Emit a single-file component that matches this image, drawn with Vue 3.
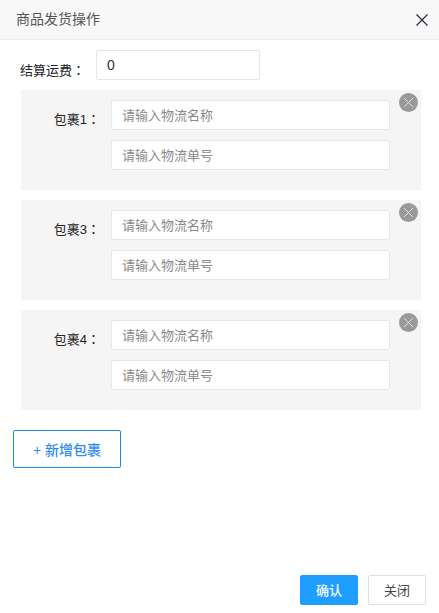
<script setup>
const packages = [1, 3, 4];
</script>

<template>
  <div class="dialog">
    <div class="dialog-header">
      <span class="dialog-title">商品发货操作</span>
      <svg class="close-icon" width="12" height="12" viewBox="0 0 12 12">
        <path d="M0.5 0.5 L11.5 11.5 M11.5 0.5 L0.5 11.5" stroke="#2f2f3f" stroke-width="1.3" fill="none" />
      </svg>
    </div>

    <div class="dialog-body">
      <div class="fee-row">
        <label class="fee-label">结算运费<span class="colon">：</span></label>
        <input class="fee-input" value="0" />
      </div>

      <div v-for="item in packages" :key="item" class="package">
        <label class="package-label">包裹{{ item }}<span class="colon">：</span></label>
        <div class="package-fields">
          <input class="text-input" placeholder="请输入物流名称" />
          <input class="text-input" placeholder="请输入物流单号" />
        </div>
        <span class="remove-btn">
          <svg width="19" height="19" viewBox="0 0 19 19">
            <path d="M5 5 L14 14 M14 5 L5 14" stroke="#dedede" stroke-width="1" fill="none" />
          </svg>
        </span>
      </div>

      <button class="add-btn">+ 新增包裹</button>
    </div>

    <div class="dialog-footer">
      <button class="btn btn-primary">确认</button>
      <button class="btn btn-default">关闭</button>
    </div>
  </div>
</template>

<style scoped>
.dialog {
  width: 439px;
  height: 613px;
  display: flex;
  flex-direction: column;
  background: #fff;
  font-family: "Liberation Sans", "Noto Sans CJK SC", sans-serif;
  font-size: 13px;
  color: #333;
  box-sizing: border-box;
  overflow: hidden;
}

.dialog-header {
  height: 39px;
  flex-shrink: 0;
  background: #f8f8f8;
  border-bottom: 1px solid #eee;
  display: flex;
  align-items: center;
  justify-content: space-between;
  padding: 0 11px 0 16px;
}

.dialog-title {
  font-size: 14px;
  color: #555;
  margin-top: -3px;
}

.dialog-body {
  flex: 1;
  padding: 10px 18px 0 13px;
}

.fee-row {
  display: flex;
  align-items: flex-start;
  margin-bottom: 10px;
}

.fee-label {
  width: 83px;
  padding: 10px 0 0 7px;
  box-sizing: border-box;
  color: #222;
}

.colon {
  font-family: "Noto Sans CJK TC", sans-serif;
}

.fee-input {
  width: 164px;
  height: 30px;
  padding: 0 10px 1px;
  box-sizing: border-box;
  border: 1px solid #e6e6e6;
  border-radius: 2px;
  font-family: inherit;
  font-size: 14px;
  color: #333;
  outline: none;
}

.package {
  position: relative;
  display: flex;
  align-items: flex-start;
  height: 100px;
  margin: 0 0 10px 8px;
  padding: 10px 0;
  box-sizing: border-box;
  background: #f5f5f5;
}

.package-label {
  width: 90px;
  padding-top: 9px;
  padding-right: 11px;
  box-sizing: border-box;
  text-align: right;
  color: #222;
}

.package-fields {
  display: flex;
  flex-direction: column;
  gap: 10px;
}

.text-input {
  width: 279px;
  height: 30px;
  padding: 0 10px;
  box-sizing: border-box;
  border: 1px solid #e6e6e6;
  border-radius: 2px;
  background: #fff;
  font-family: inherit;
  font-size: 13px;
  outline: none;
}

.text-input::placeholder {
  color: #8a8a8a;
}

.remove-btn {
  position: absolute;
  top: 3px;
  right: 3px;
  width: 19px;
  height: 19px;
  border-radius: 50%;
  background: #999;
  display: flex;
}

.add-btn {
  display: block;
  width: 108px;
  height: 38px;
  margin-top: 20px;
  border: 1px solid #1e88e5;
  border-radius: 2px;
  background: #fff;
  color: #2d8cf0;
  font-family: inherit;
  font-size: 14px;
  font-weight: 500;
}

.dialog-footer {
  display: flex;
  justify-content: flex-end;
  gap: 10px;
  padding: 0 13px 8px 0;
}

.btn {
  width: 58px;
  height: 30px;
  border-radius: 2px;
  font-family: inherit;
  font-size: 13px;
  padding: 0 0 1px;
}

.btn-primary {
  background: #1e9fff;
  border: 1px solid #1e9fff;
  color: #fff;
  font-weight: 500;
}

.btn-default {
  background: #fff;
  border: 1px solid #dedede;
  color: #444;
}
</style>
